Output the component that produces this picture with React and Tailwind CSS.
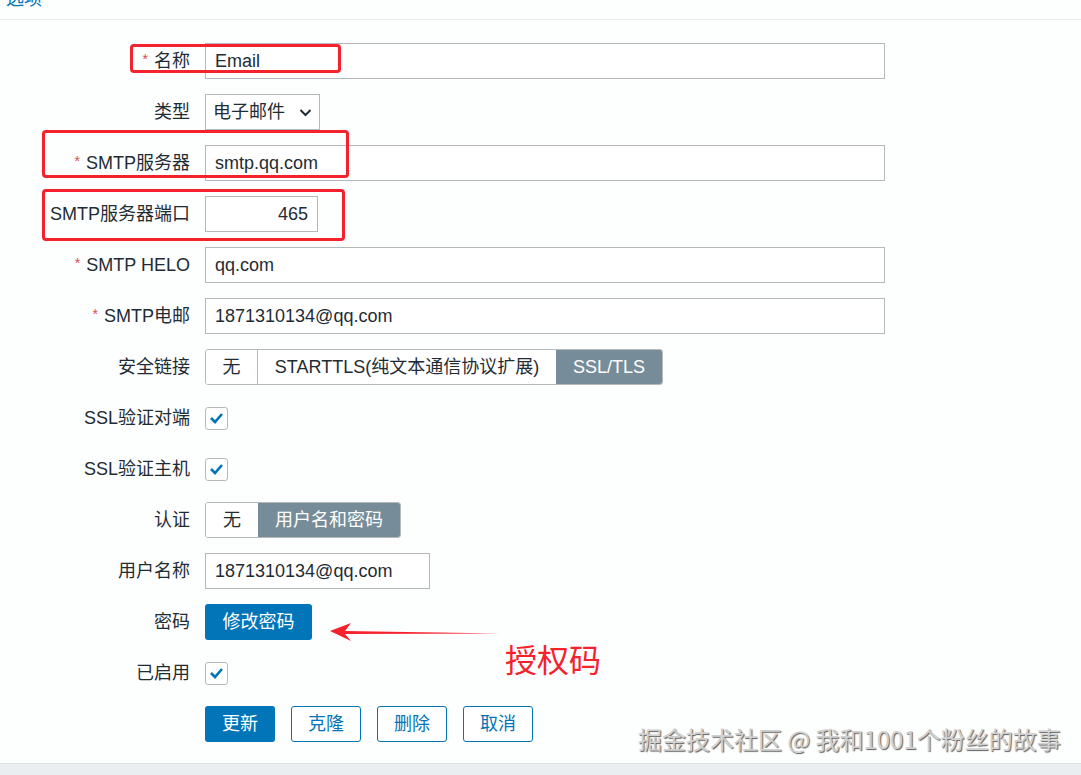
import React from "react";

const font = { fontFamily: '"Liberation Sans", "Noto Sans CJK SC", sans-serif' };

function Label({ children, req }) {
  return (
    <div className="flex items-center justify-end text-[18px] text-[#1f2c33] whitespace-nowrap">
      {req && <span className="text-[#d64e4e] text-[14px] mr-[6px] -mt-[4px]">*</span>}
      {children}
    </div>
  );
}

function Check() {
  return (
    <div className="w-[23px] h-[23px] border border-[#b5b9bb] rounded-[3px] bg-white flex items-center justify-center">
      <svg width="15" height="12" viewBox="0 0 15 12">
        <polyline points="2,6 6,10 13,2" fill="none" stroke="#0275b8" strokeWidth="2.6" />
      </svg>
    </div>
  );
}

function Row({ label, req, children }) {
  return (
    <div className="grid grid-cols-[190px_1fr] gap-x-[15px] h-[36px]">
      <Label req={req}>{label}</Label>
      <div className="flex items-center">{children}</div>
    </div>
  );
}

function Input({ w, value, right }) {
  return (
    <div
      className={`${w} h-[36px] border border-[#b5b9bb] bg-white flex items-center px-[9px] text-[18px] text-[#1f2c33] ${right ? "justify-end" : ""}`}
    >
      {value}
    </div>
  );
}

export default function App() {
  return (
    <div className="w-[1081px] h-[775px] flex flex-col bg-[#fdfefe] relative overflow-hidden" style={font}>
      <div className="h-[20px] border-b border-[#e8ebed] overflow-hidden pl-[6px]">
        <div className="text-[18px] leading-[18px] text-[#0275b8] -mt-[10px]">选项</div>
      </div>
      <div className="flex-1 flex flex-col gap-[15px] pt-[23px]">
        <Row label="名称" req>
          <Input w="w-[680px]" value="Email" />
        </Row>
        <Row label="类型">
          <div className="w-[115px] h-[36px] border border-[#b5b9bb] bg-white flex items-center justify-between pl-[7px] pr-[7px] text-[18px] text-[#1f2c33]">
            <span>电子邮件</span>
            <svg width="13" height="9" viewBox="0 0 13 9">
              <polyline points="1.5,2 6.5,7 11.5,2" fill="none" stroke="#1f2c33" strokeWidth="2" />
            </svg>
          </div>
        </Row>
        <Row label="SMTP服务器" req>
          <Input w="w-[680px]" value="smtp.qq.com" />
        </Row>
        <Row label="SMTP服务器端口">
          <Input w="w-[113px]" value="465" right />
        </Row>
        <Row label="SMTP HELO" req>
          <Input w="w-[680px]" value="qq.com" />
        </Row>
        <Row label="SMTP电邮" req>
          <Input w="w-[680px]" value="1871310134@qq.com" />
        </Row>
        <Row label="安全链接">
          <div className="flex h-[36px] border border-[#b5b9bb] rounded-[3px] overflow-hidden text-[18px] text-[#1f2c33]">
            <div className="w-[52px] flex items-center justify-center bg-white border-r border-[#b5b9bb]">无</div>
            <div className="w-[298px] flex items-center justify-center bg-white">STARTTLS(纯文本通信协议扩展)</div>
            <div className="w-[106px] flex items-center justify-center bg-[#768d99] text-white">SSL/TLS</div>
          </div>
        </Row>
        <Row label="SSL验证对端">
          <Check />
        </Row>
        <Row label="SSL验证主机">
          <Check />
        </Row>
        <Row label="认证">
          <div className="flex h-[36px] border border-[#b5b9bb] rounded-[3px] overflow-hidden text-[18px] text-[#1f2c33]">
            <div className="w-[52px] flex items-center justify-center bg-white">无</div>
            <div className="w-[142px] flex items-center justify-center bg-[#768d99] text-white">用户名和密码</div>
          </div>
        </Row>
        <Row label="用户名称">
          <Input w="w-[225px]" value="1871310134@qq.com" />
        </Row>
        <Row label="密码">
          <div className="w-[107px] h-[36px] rounded-[3px] bg-[#0275b8] text-white text-[18px] flex items-center justify-center">修改密码</div>
        </Row>
        <Row label="已启用">
          <Check />
        </Row>
        <div className="grid grid-cols-[190px_1fr] gap-x-[15px] h-[36px]">
          <div />
          <div className="flex gap-[16px] text-[18px]">
            <div className="w-[70px] h-[36px] rounded-[3px] bg-[#0275b8] text-white flex items-center justify-center">更新</div>
            <div className="w-[70px] h-[36px] rounded-[3px] border border-[#0275b8] text-[#0275b8] bg-white flex items-center justify-center">克隆</div>
            <div className="w-[70px] h-[36px] rounded-[3px] border border-[#0275b8] text-[#0275b8] bg-white flex items-center justify-center">删除</div>
            <div className="w-[70px] h-[36px] rounded-[3px] border border-[#0275b8] text-[#0275b8] bg-white flex items-center justify-center">取消</div>
          </div>
        </div>
      </div>
      <div className="h-[12px] bg-[#ebeef0] border-t border-[#dfe3e6]" />

      {/* annotations */}
      <div className="absolute left-[130px] top-[44px] w-[211px] h-[29px] border-[3px] border-[#f5222d] rounded-[4px]" />
      <div className="absolute left-[42px] top-[130px] w-[307px] h-[48px] border-[3px] border-[#f5222d] rounded-[4px]" />
      <div className="absolute left-[42px] top-[189px] w-[303px] h-[52px] border-[3px] border-[#f5222d] rounded-[4px]" />
      <svg className="absolute left-[325px] top-[620px]" width="180" height="24" viewBox="0 0 180 24">
        <polygon points="5,11 26,3 20,11 175,13.5 20,14 26,21" fill="#f5222d" />
      </svg>
      <div className="absolute left-[505px] top-[634px] text-[32px] text-[#f5222d]" style={{ fontFamily: '"Noto Sans CJK SC", sans-serif' }}>授权码</div>
      <div
        className="absolute left-[638px] top-[721px] text-[24px] text-[#d0d0d0] whitespace-nowrap"
        style={{ fontFamily: '"Noto Sans CJK SC", sans-serif', textShadow: "1px 1px 1px #5e5e5e" }}
      >
        掘金技术社区 @ 我和1001个粉丝的故事
      </div>
    </div>
  );
}
